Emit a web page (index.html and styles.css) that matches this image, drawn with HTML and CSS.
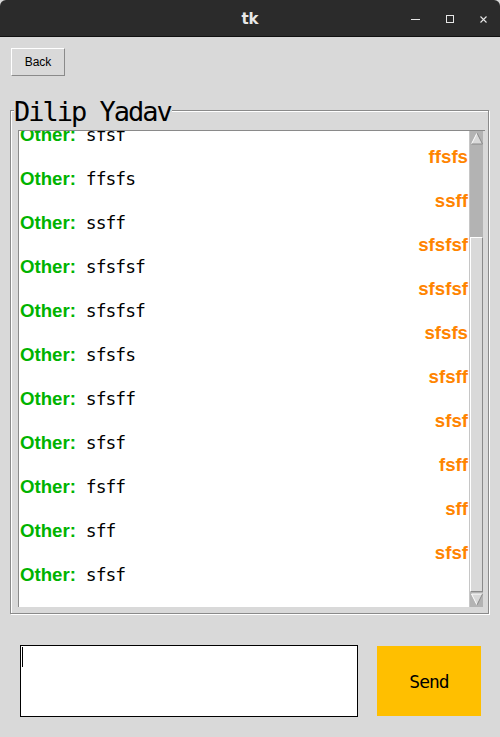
FILE: index.html
```html
<!DOCTYPE html>
<html>
<head>
<meta charset="utf-8">
<link rel="stylesheet" href="styles.css">
</head>
<body>
<div class="window">
  <div class="titlebar">
    <div></div>
    <div class="title">tk</div>
    <svg class="controls" width="84" height="36" viewBox="0 0 84 36">
      <line x1="5" y1="18.5" x2="14" y2="18.5" stroke="#e6e6e6" stroke-width="1"/>
      <rect x="40.5" y="14.5" width="7" height="7" fill="none" stroke="#e6e6e6" stroke-width="1"/>
      <path d="M74.5 15.5 L80.5 21.5 M80.5 15.5 L74.5 21.5" stroke="#e6e6e6" stroke-width="1.1"/>
    </svg>
  </div>

  <div class="toolbar">
    <button class="back">Back</button>
  </div>

  <div class="frame">
    <div class="legend">Dilip Yadav</div>
    <div class="view">
      <div class="text">
        <div class="lines">
          <div class="ln"><b>Other:</b><span class="msg"> sfsf</span></div>
          <div class="ln me">ffsfs</div>
          <div class="ln"><b>Other:</b><span class="msg"> ffsfs</span></div>
          <div class="ln me">ssff</div>
          <div class="ln"><b>Other:</b><span class="msg"> ssff</span></div>
          <div class="ln me">sfsfsf</div>
          <div class="ln"><b>Other:</b><span class="msg"> sfsfsf</span></div>
          <div class="ln me">sfsfsf</div>
          <div class="ln"><b>Other:</b><span class="msg"> sfsfsf</span></div>
          <div class="ln me">sfsfs</div>
          <div class="ln"><b>Other:</b><span class="msg"> sfsfs</span></div>
          <div class="ln me">sfsff</div>
          <div class="ln"><b>Other:</b><span class="msg"> sfsff</span></div>
          <div class="ln me">sfsf</div>
          <div class="ln"><b>Other:</b><span class="msg"> sfsf</span></div>
          <div class="ln me">fsff</div>
          <div class="ln"><b>Other:</b><span class="msg"> fsff</span></div>
          <div class="ln me">sff</div>
          <div class="ln"><b>Other:</b><span class="msg"> sff</span></div>
          <div class="ln me">sfsf</div>
          <div class="ln"><b>Other:</b><span class="msg"> sfsf</span></div>
          <div class="ln"></div>
        </div>
      </div>
      <div class="sb">
        <svg class="arrow" width="14" height="15" viewBox="0 0 14 15">
          <polygon points="7,2 12.5,13 1.5,13" fill="#d9d9d9"/>
          <path d="M1.5 13 L7 2" stroke="#ffffff" stroke-width="1" fill="none"/>
          <path d="M7 2 L12.5 13 L1.5 13" stroke="#8a8a8a" stroke-width="1" fill="none"/>
        </svg>
        <div class="gap"></div>
        <div class="slider"></div>
        <svg class="arrow" width="14" height="15" viewBox="0 0 14 15">
          <polygon points="1.5,2 12.5,2 7,13" fill="#d9d9d9"/>
          <path d="M7 13 L1.5 2 L12.5 2" stroke="#ffffff" stroke-width="1" fill="none"/>
          <path d="M12.5 2 L7 13" stroke="#8a8a8a" stroke-width="1" fill="none"/>
        </svg>
      </div>
    </div>
  </div>

  <div class="composer">
    <div class="entry"><span class="caret"></span></div>
    <button class="send">Send</button>
  </div>
</div>
</body>
</html>
```

FILE: styles.css
```css
html, body {
  margin: 0;
  padding: 0;
  background: #d9d9d9;
}
.window {
  width: 500px;
  height: 737px;
  background: #d9d9d9;
  overflow: hidden;
}
.titlebar {
  height: 36px;
  background: #2b2b2b;
  border-bottom: 1px solid #111111;
  border-radius: 6px 6px 0 0;
  display: grid;
  grid-template-columns: 1fr auto 1fr;
  align-items: center;
}
.title {
  color: #e8e8e8;
  font-family: "DejaVu Sans", sans-serif;
  font-weight: bold;
  font-size: 15px;
  line-height: 36px;
  padding-top: 1px;
}
.controls {
  justify-self: end;
  margin-right: 10px;
  display: block;
}
.toolbar {
  padding: 11px 0 0 11px;
  height: 28px;
}
.back {
  display: block;
  width: 54px;
  height: 28px;
  margin: 0;
  padding: 0;
  background: #d9d9d9;
  border: 1px solid;
  border-color: #ffffff #8a8a8a #8a8a8a #ffffff;
  font-family: "Liberation Sans", Arial, sans-serif;
  font-size: 12px;
  color: #000000;
}
.frame {
  margin: 34px 0 0 10px;
  width: 479px;
  height: 504px;
  box-sizing: border-box;
  border: 1px solid #8a8a8a;
  box-shadow: 1px 1px 0 #ffffff, inset 1px 1px 0 #ffffff;
  padding: 0 3px 6px 7px;
}
.legend {
  width: fit-content;
  margin: -13px 0 4px -4px;
  padding: 0 1px 0 0;
  height: 28px;
  line-height: 28px;
  background: #d9d9d9;
  font-family: "DejaVu Sans Mono", monospace;
  font-size: 27px;
  letter-spacing: -2px;
  color: #000000;
}
.view {
  display: flex;
  border-top: 1px solid #8a8a8a;
  border-left: 1px solid #8a8a8a;
  height: 476px;
}
.text {
  width: 450px;
  background: #ffffff;
  overflow: hidden;
}
.lines {
  margin-top: -7px;
}
.ln {
  height: 22px;
  line-height: 22px;
  padding: 0 1px;
  font-family: "Liberation Sans", Arial, sans-serif;
  font-weight: bold;
  font-size: 18.67px;
  white-space: nowrap;
}
.ln b {
  color: #00b300;
}
.msg {
  font-family: "DejaVu Sans Mono", monospace;
  font-weight: normal;
  font-size: 18px;
  letter-spacing: -1px;
  line-height: 16px;
  color: #000000;
  white-space: pre;
}
.me {
  text-align: right;
  color: #ff8400;
}
.sb {
  width: 16px;
  box-sizing: border-box;
  background: #b3b3b3;
  border-left: 1px solid #c6c6c6;
  border-right: 2px solid #d9d9d9;
  display: flex;
  flex-direction: column;
}
.arrow {
  display: block;
  flex: none;
}
.gap {
  height: 91px;
  flex: none;
}
.slider {
  flex: 1;
  background: #d9d9d9;
  border: 1px solid;
  border-color: #ffffff #8a8a8a #8a8a8a #ffffff;
}
.composer {
  display: flex;
  align-items: flex-start;
  padding: 31px 0 0 20px;
  gap: 19px;
}
.entry {
  width: 338px;
  height: 72px;
  box-sizing: border-box;
  border: 1px solid #000000;
  background: #ffffff;
  padding: 1px 0 0 1px;
}
.caret {
  display: block;
  width: 1px;
  height: 20px;
  background: #000000;
}
.send {
  margin: 1px 0 0 0;
  width: 104px;
  height: 70px;
  border: none;
  padding: 0;
  background: #ffbf00;
  font-family: "DejaVu Sans Mono", monospace;
  font-size: 18px;
  letter-spacing: -1px;
  color: #000000;
}
```
